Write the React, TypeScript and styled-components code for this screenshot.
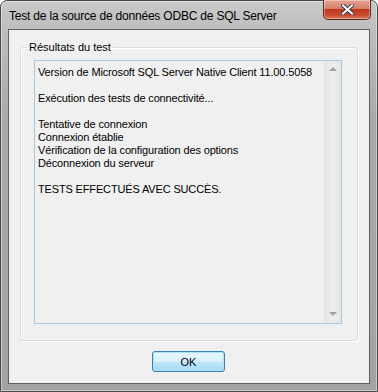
import React from "react";
import styled, { createGlobalStyle } from "styled-components";

const Global = createGlobalStyle`
  html, body { margin: 0; padding: 0; background: #ffffff; }
  * { box-sizing: border-box; }
`;

const Window = styled.div`
  width: 378px;
  height: 392px;
  border: 1px solid #4a4a4a;
  border-radius: 7px 7px 0 0;
  background: linear-gradient(180deg, #c9c9c9 0px, #bdbdbd 30px, #a9a9a9 120px, #a3a3a3 100%);
  display: flex;
  flex-direction: column;
  padding: 0 7px 7px 7px;
  box-shadow: inset 0 0 0 1px rgba(255,255,255,0.45);
`;

const TitleBar = styled.div`
  height: 28px;
  display: flex;
  align-items: flex-start;
  justify-content: space-between;
  padding-left: 1px;
`;

const Title = styled.div`
  font-family: "Segoe UI", "Liberation Sans", Arial, sans-serif;
  font-size: 12px;
  color: #000;
  margin-top: 8px;
  letter-spacing: -0.2px;
`;

const CloseButton = styled.div`
  width: 48px;
  height: 20px;
  margin-top: -1px;
  margin-right: -1px;
  border: 1px solid #5a2a24;
  border-top: none;
  border-radius: 0 0 5px 5px;
  background: linear-gradient(180deg, #e8a493 0%, #d67e6a 45%, #c2381d 50%, #c84a2e 80%, #e07a5a 100%);
  box-shadow: inset 0 0 0 1px rgba(255,255,255,0.35);
  display: flex;
  align-items: center;
  justify-content: center;
`;

const Client = styled.div`
  flex: 1;
  background: #f0f0f0;
  border: 1px solid #5f5f5f;
  display: flex;
  flex-direction: column;
  padding: 11px 11px 0 11px;
`;

const Group = styled.fieldset`
  margin: 0;
  padding: 7px 15px 0 13px;
  border: 1px solid #d5dfe5;
  border-radius: 3px;
  height: 300px;
  box-shadow: inset 1px 1px 0 #ffffff, 1px 1px 0 #ffffff;
`;

const Legend = styled.legend`
  font-family: "Liberation Sans", Arial, sans-serif;
  font-size: 11px;
  color: #000;
  padding: 0 2px;
  margin-left: -7px;
`;

const TextBox = styled.div`
  height: 264px;
  border: 1px solid #a5c9e0;
  background: #f0f0f0;
  display: flex;
`;

const Lines = styled.div`
  flex: 1;
  padding: 5px 3px;
  font-family: "Liberation Sans", Arial, sans-serif;
  font-size: 11px;
  line-height: 13px;
  color: #000;
  letter-spacing: -0.15px;
`;

const Line = styled.div`
  height: 13px;
  white-space: pre;
`;

const ScrollBar = styled.div`
  width: 17px;
  background: linear-gradient(90deg, #e6e6e6, #ededed 50%, #e6e6e6);
  border-left: 1px solid #e0e0e0;
  display: flex;
  flex-direction: column;
  justify-content: space-between;
  align-items: center;
  padding: 6px 0 7px;
`;

const Arrow = styled.div<{ $down?: boolean }>`
  width: 0;
  height: 0;
  border-left: 4px solid transparent;
  border-right: 4px solid transparent;
  ${(p) => (p.$down ? "border-top: 4px solid #a0a0a0;" : "border-bottom: 4px solid #a0a0a0;")}
`;

const ButtonRow = styled.div`
  display: flex;
  justify-content: center;
  padding-top: 10px;
  padding-right: 1px;
`;

const OkButton = styled.button`
  width: 73px;
  height: 21px;
  border: 1px solid #3c7fb1;
  border-radius: 3px;
  background: linear-gradient(180deg, #eaf6fd 0%, #d9f0fc 50%, #bee6fd 51%, #a7d9f5 100%);
  box-shadow: inset 0 0 0 1px #a8e5fb;
  font-family: "Liberation Sans", Arial, sans-serif;
  font-size: 11px;
  color: #000;
  padding: 0;
`;

const lines = [
  "Version de Microsoft SQL Server Native Client 11.00.5058",
  "",
  "Exécution des tests de connectivité...",
  "",
  "Tentative de connexion",
  "Connexion établie",
  "Vérification de la configuration des options",
  "Déconnexion du serveur",
  "",
  "TESTS EFFECTUÉS AVEC SUCCÈS.",
];

export default function App() {
  return (
    <>
      <Global />
      <Window>
        <TitleBar>
          <Title>Test de la source de données ODBC de SQL Server</Title>
          <CloseButton>
            <svg width="13" height="11" viewBox="0 0 13 11">
              <path
                d="M2 1.5 L11 9.5 M11 1.5 L2 9.5"
                stroke="#3b3b4a"
                strokeWidth="4"
                strokeLinecap="square"
              />
              <path
                d="M2 1.5 L11 9.5 M11 1.5 L2 9.5"
                stroke="#ffffff"
                strokeWidth="2"
                strokeLinecap="square"
              />
            </svg>
          </CloseButton>
        </TitleBar>
        <Client>
          <Group>
            <Legend>Résultats du test</Legend>
            <TextBox>
              <Lines>
                {lines.map((l, i) => (
                  <Line key={i}>{l}</Line>
                ))}
              </Lines>
              <ScrollBar>
                <Arrow />
                <Arrow $down />
              </ScrollBar>
            </TextBox>
          </Group>
          <ButtonRow>
            <OkButton>OK</OkButton>
          </ButtonRow>
        </Client>
      </Window>
    </>
  );
}
